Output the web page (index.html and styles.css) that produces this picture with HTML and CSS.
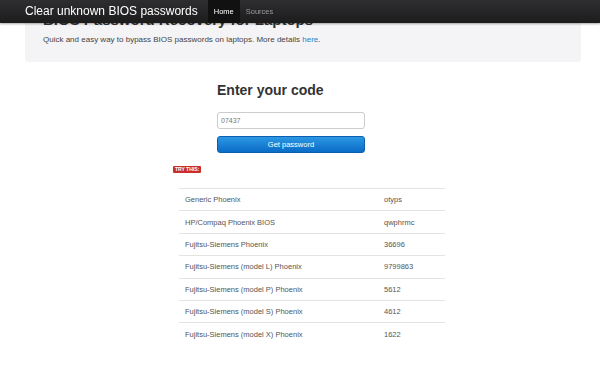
FILE: index.html
```html
<!DOCTYPE html>
<html lang="en">
<head>
    <meta charset="UTF-8">
    <meta name="viewport" content="width=device-width, initial-scale=1.0">
    <title>Clear unknown BIOS passwords</title>
    <link rel="stylesheet" href="styles.css">
</head>
<body>
    <header class="navbar">
        <a class="brand" href="#">Clear unknown BIOS passwords</a>
        <ul class="nav">
            <li class="active"><a href="#">Home</a></li>
            <li><a href="#">Sources</a></li>
        </ul>
    </header>

    <div class="container">
        <div class="jumbotron">
            <h1>BIOS Password Recovery for Laptops</h1>
            <p>Quick and easy way to bypass BIOS passwords on laptops. More details <a href="#">here</a>.</p>
        </div>

        <form class="code-form">
            <h2>Enter your code</h2>
            <input type="text" class="code-input" value="07437">
            <button type="button" class="btn-primary">Get password</button>
        </form>

        <span class="label-try">TRY THIS:</span>

        <table class="results">
            <tr><td>Generic Phoenix</td><td>otyps</td></tr>
            <tr><td>HP/Compaq Phoenix BIOS</td><td>qwphrmc</td></tr>
            <tr><td>Fujitsu-Siemens Phoenix</td><td>36696</td></tr>
            <tr><td>Fujitsu-Siemens (model L) Phoenix</td><td>9799863</td></tr>
            <tr><td>Fujitsu-Siemens (model P) Phoenix</td><td>5612</td></tr>
            <tr><td>Fujitsu-Siemens (model S) Phoenix</td><td>4612</td></tr>
            <tr><td>Fujitsu-Siemens (model X) Phoenix</td><td>1622</td></tr>
        </table>
    </div>
</body>
</html>
```

FILE: styles.css
```css
body {
    margin: 0;
    font-family: 'Liberation Sans', Arial, sans-serif;
    background-color: #ffffff;
    color: #333333;
}

.navbar {
    position: fixed;
    top: 0;
    left: 0;
    right: 0;
    height: 23px;
    display: flex;
    align-items: stretch;
    background: linear-gradient(to bottom, #2e2d30, #1c1c1d);
    box-shadow: 0 1px 2px rgba(0, 0, 0, 0.35);
    z-index: 10;
}

.navbar .brand {
    color: #ffffff;
    text-decoration: none;
    font-size: 12px;
    line-height: 23px;
    padding: 0 10px 0 25px;
}

.navbar .nav {
    list-style: none;
    margin: 0;
    padding: 0;
    display: flex;
}

.navbar .nav li a {
    display: block;
    padding: 0 6px;
    line-height: 23px;
    font-size: 7.5px;
    color: #9a9a9a;
    text-decoration: none;
}

.navbar .nav li.active a {
    background: #111111;
    color: #ffffff;
}

.container {
    padding: 0 19px 0 25px;
}

.jumbotron {
    margin-top: -3px;
    padding: 14px 18px 16px;
    background: #f4f3f6;
    border-radius: 4px;
}

.jumbotron h1 {
    margin: 0 0 5px;
    font-size: 15px;
    line-height: 18px;
    color: #333333;
}

.jumbotron p {
    margin: 0;
    font-size: 8px;
    line-height: 12px;
    color: #444444;
}

.jumbotron p a {
    color: #2a7fc9;
    text-decoration: none;
}

.code-form {
    width: 148px;
    margin: 19px 0 0 192px;
    display: flex;
    flex-direction: column;
}

.code-form h2 {
    margin: 0 0 13px;
    font-size: 14px;
    line-height: 18px;
    color: #333333;
}

.code-input {
    box-sizing: border-box;
    height: 17px;
    margin: 0;
    padding: 0 3px;
    border: 1px solid #cccccc;
    border-radius: 3px;
    font-family: inherit;
    font-size: 7px;
    color: #777777;
}

.btn-primary {
    height: 17px;
    margin-top: 7px;
    border: 1px solid #0a5fb0;
    border-radius: 3px;
    background: linear-gradient(to bottom, #2c97e3, #0a6cc6);
    color: #ffffff;
    font-family: inherit;
    font-size: 7.5px;
}

.label-try {
    display: inline-block;
    margin: 13px 0 0 148px;
    padding: 0 2px;
    height: 7px;
    line-height: 7px;
    background: #c9302c;
    border-radius: 1px;
    color: #ffffff;
    font-size: 5px;
    font-weight: bold;
}

.results {
    width: 266px;
    margin: 13px 0 0 154px;
    border-collapse: collapse;
    font-size: 7.5px;
    color: #555555;
}

.results td {
    height: 22.4px;
    padding: 0 6px;
    border-top: 1px solid #e3e3e3;
    box-sizing: border-box;
}

.results td:last-child {
    width: 67px;
}
```
